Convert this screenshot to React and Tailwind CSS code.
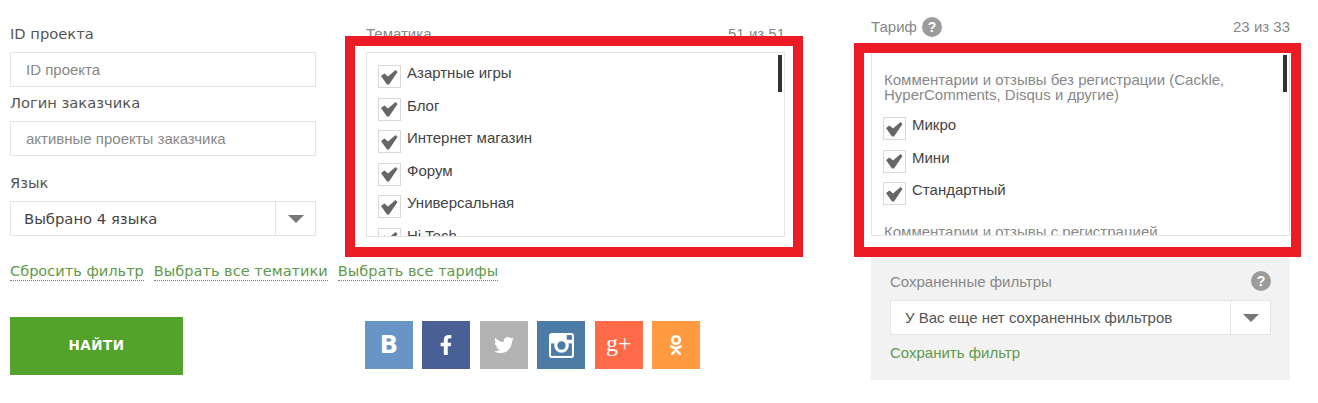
import { FaFacebookF, FaTwitter, FaOdnoklassniki } from "react-icons/fa";

const arial = "font-['Liberation_Sans',Arial,sans-serif]";
const verdana = "font-['DejaVu_Sans',Verdana,sans-serif]";

const topics = ["Азартные игры", "Блог", "Интернет магазин", "Форум", "Универсальная", "Hi Tech"];
const tariffs = ["Микро", "Мини", "Стандартный"];

function CheckRow({ label }) {
  return (
    <div className="flex items-start h-[32.5px]">
      <span className="flex items-center justify-center w-[23px] h-[23px] border border-[#d9d9d9] shrink-0">
        <svg width="17" height="15" viewBox="0 0 17 15" className="mt-[1px]">
          <path d="M0 6 L3.5 3.5 L7 6.5 L14.5 0 L16.5 2 L8 14.5 L6 14.5 Z" fill="#666" />
        </svg>
      </span>
      <span className="ml-[6px] -mt-[3px] text-[15px] leading-[22px] text-[#444]">{label}</span>
    </div>
  );
}

function Select({ text, textClass }) {
  return (
    <div className="flex h-[35px] bg-white border border-[#e4e4e4]">
      <div className={"flex-1 flex items-center pt-[1px] " + textClass}>{text}</div>
      <div className="w-[40px] border-l border-[#e4e4e4] flex items-center justify-center">
        <span className="w-0 h-0 border-x-[8px] border-x-transparent border-t-[8px] border-t-[#777]" />
      </div>
    </div>
  );
}

function Question({ className = "" }) {
  return (
    <span className={"flex items-center justify-center w-5 h-5 rounded-full bg-[#9b9b9b] text-white text-[14px] font-bold leading-none " + className}>
      ?
    </span>
  );
}

function Social({ color, children }) {
  return (
    <div className={"flex items-center justify-center w-[47.6px] h-12 text-white " + color}>
      {children}
    </div>
  );
}

function DottedLink({ children }) {
  return (
    <a className="text-[#5f9a4a] leading-[18px] border-b border-dotted border-[#5f9a4a]">{children}</a>
  );
}

function RedFrame({ className }) {
  return <div className={"absolute border-[10px] border-[#ed1c24] pointer-events-none " + className} />;
}

export default function App() {
  return (
    <div className={"flex w-[1318px] h-[403px] overflow-hidden bg-white pl-[10px] " + arial}>
      <div className="w-[775px] shrink-0">
        <div className="flex gap-[50px]">
          <div className="w-[306px] shrink-0">
            <div className={"pt-[24px] h-[52px] text-[14.7px] leading-[20px] text-[#555] " + verdana}>ID проекта</div>
            <div className="flex items-center h-[35px] px-[15px] pt-[1px] border border-[#e4e4e4] text-[15px] text-[#888]">ID проекта</div>
            <div className={"pt-[6px] h-[34px] text-[14.7px] leading-[20px] text-[#555] " + verdana}>Логин заказчика</div>
            <div className="flex items-center h-[35px] px-[15px] pt-[1px] border border-[#e4e4e4] text-[15px] text-[#888]">активные проекты заказчика</div>
            <div className={"pt-[17px] h-[45px] text-[14.7px] leading-[20px] text-[#555] " + verdana}>Язык</div>
            <Select text="Выбрано 4 языка" textClass={"pl-[13px] text-[14.8px] text-[#444] " + verdana} />
          </div>
          <div className="w-[419px] shrink-0">
            <div className="flex justify-between pt-[24px] h-[52px] text-[15px] leading-[20px] text-[#888]">
              <span>Тематика</span>
              <span>51 из 51</span>
            </div>
            <div className="relative h-[185px] overflow-hidden border border-[#e4e4e4] pl-[11px] pt-[12px]">
              {topics.map((t) => (
                <CheckRow key={t} label={t} />
              ))}
              <div className="absolute right-[2px] top-[2px] w-[4px] h-[37px] bg-[#333]" />
            </div>
          </div>
        </div>
        <div className={"flex gap-[10px] mt-[25px] text-[14.55px] " + verdana}>
          <DottedLink>Сбросить фильтр</DottedLink>
          <DottedLink>Выбрать все тематики</DottedLink>
          <DottedLink>Выбрать все тарифы</DottedLink>
        </div>
        <div className="flex mt-[36px]">
          <button className={"w-[173px] h-[58px] pb-[2px] bg-[#52a22c] text-white text-[13.5px] font-bold tracking-[0.5px] " + verdana}>
            НАЙТИ
          </button>
          <div className="flex gap-[9.9px] ml-[182px] mt-[4px]">
            <Social color="bg-[#6894c6]">
              <span className={"text-[24px] font-bold leading-none " + verdana}>В</span>
            </Social>
            <Social color="bg-[#486095]">
              <FaFacebookF size={20} />
            </Social>
            <Social color="bg-[#b3b3b3]">
              <FaTwitter size={20} />
            </Social>
            <Social color="bg-[#4c7ba6]">
              <svg width="25" height="25" viewBox="0 0 24 24">
                <rect x="0" y="0" width="24" height="24" rx="3" fill="#fff" />
                <rect x="2" y="10" width="20" height="12" fill="#4c7ba6" />
                <circle cx="12" cy="12" r="7" fill="#fff" />
                <circle cx="12" cy="12" r="4" fill="#4c7ba6" />
                <rect x="17" y="2" width="5" height="4.5" fill="#4c7ba6" />
              </svg>
            </Social>
            <Social color="bg-[#ff6a48]">
              <span className="font-['Liberation_Serif',serif] text-[24px] leading-none -mt-[4px]">g+</span>
            </Social>
            <Social color="bg-[#ff9a40]">
              <FaOdnoklassniki size={20} />
            </Social>
          </div>
        </div>
      </div>

      <div className="w-[419px] ml-[86px] shrink-0">
        <div className="flex justify-between items-start pt-[16px] h-[52px] text-[15px] text-[#888]">
          <span className="flex items-center gap-[5px]">
            Тариф <Question />
          </span>
          <span>23 из 33</span>
        </div>
        <div className="relative h-[184px] overflow-hidden border border-[#e4e4e4] pl-[11px] pt-[19px]">
          <p className="ml-[1px] text-[15px] leading-[15px] text-[#888] w-[360px] mb-[15px]">
            Комментарии и отзывы без регистрации (Cackle, HyperComments, Disqus и другие)
          </p>
          {tariffs.map((t) => (
            <CheckRow key={t} label={t} />
          ))}
          <p className="ml-[1px] mt-[9px] text-[15px] leading-[15px] text-[#888]">Комментарии и отзывы с регистрацией</p>
          <div className="absolute right-[2px] top-[2px] w-[4px] h-[37px] bg-[#333]" />
        </div>
        <div className="mt-[21px] h-[123px] bg-[#f2f2f2] px-[19px] pt-[14px]">
          <div className="flex justify-between items-center h-[20px] text-[15px] text-[#888]">
            <span className="mt-[3px]">Сохраненные фильтры</span>
            <Question />
          </div>
          <div className="mt-[9px]">
            <Select text="У Вас еще нет сохраненных фильтров" textClass="pl-[14px] text-[15px] text-[#555]" />
          </div>
          <a className="block mt-[7px] text-[15px] text-[#5f9a4a]">Сохранить фильтр</a>
        </div>
      </div>

      <RedFrame className="left-[345px] top-[36px] w-[458px] h-[221px]" />
      <RedFrame className="left-[854px] top-[43px] w-[447px] h-[214px]" />
    </div>
  );
}
